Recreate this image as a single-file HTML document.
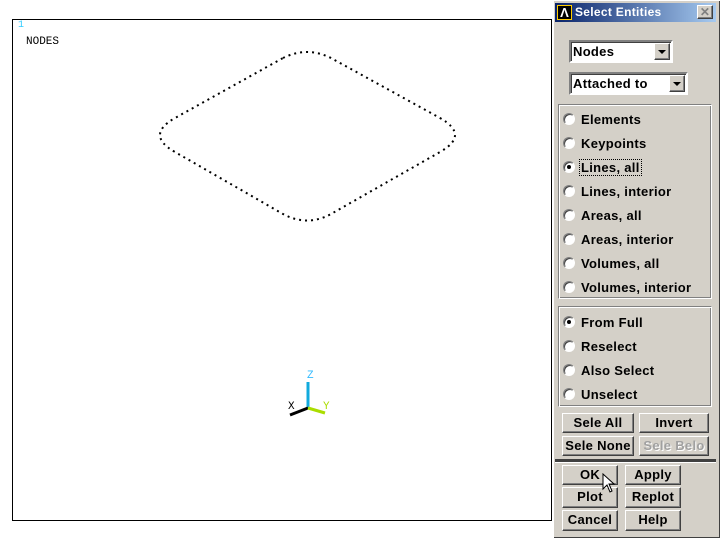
<!DOCTYPE html><html><head><style>
body{margin:0;width:720px;height:538px;background:#fff;position:relative;overflow:hidden;font-family:"Liberation Sans",sans-serif}
.a{position:absolute}
.dlg{left:552px;top:0;width:168px;height:538px;background:#d4d0c8;border-left:1px solid #fff;box-sizing:border-box;box-shadow:inset 1px 1px 0 #fff,inset -1px -1px 0 #404040}
.lbl{font-weight:bold;font-size:13px;color:#000;white-space:nowrap;letter-spacing:0.3px}
.btn{background:#d4d0c8;box-sizing:border-box;border:1px solid;border-color:#fff #404040 #404040 #fff;box-shadow:inset -1px -1px 0 #808080;font-weight:bold;font-size:13px;text-align:center;line-height:17px;letter-spacing:0.3px}
.grp{box-sizing:border-box;border:1px solid;border-color:#808080 #fff #fff #808080;box-shadow:inset 1px 1px 0 #fff,inset -1px -1px 0 #808080}
.rad{width:12px;height:12px;border-radius:50%;background:#fff;box-sizing:border-box;border:1px solid;border-color:#808080 #fff #fff #808080;box-shadow:inset 1px 1px 0 #404040}
.dd{background:#fff;box-sizing:border-box;border:2px solid;border-color:#808080 #fff #fff #808080;box-shadow:inset 1px 1px 0 #404040}
.arr{position:absolute;right:1px;top:1px;width:16px;height:17px;background:#d4d0c8;border:1px solid;border-color:#fff #404040 #404040 #fff;box-sizing:border-box;box-shadow:inset -1px -1px 0 #808080}
.arr:after{content:"";position:absolute;left:3px;top:6px;border:4px solid transparent;border-top:4px solid #000}
</style></head><body>
<div class="a" style="left:12px;top:19px;width:540px;height:502px;border:1px solid #000;box-sizing:border-box"></div>
<div class="a" style="left:18px;top:20px;font:10px 'Liberation Mono',monospace;color:#3cf">1</div>
<div class="a" style="left:26px;top:36px;font:11px 'Liberation Mono',monospace;color:#000">NODES</div>
<svg class="a" style="left:0;top:0" width="552" height="538">
<path d="M283,58 Q307,46 331,58 L440,118 Q470,135 440,152 L331,214 Q307,227 283,214 L175,152 Q145,135 175,118 Z" fill="none" stroke="#000" stroke-width="2" stroke-dasharray="2 4"/>
<line x1="308" y1="408" x2="308" y2="382" stroke="#1ad" stroke-width="3"/>
<line x1="308" y1="408" x2="290" y2="415" stroke="#000" stroke-width="3"/>
<line x1="308" y1="408" x2="325" y2="413" stroke="#ad0" stroke-width="3"/>
<text x="307" y="378" font-size="11" fill="#3bf" font-family="Liberation Mono">Z</text>
<text x="288" y="409" font-size="11" fill="#000" font-family="Liberation Mono">X</text>
<text x="323" y="409" font-size="11" fill="#ad0" font-family="Liberation Mono">Y</text>
</svg>
<div class="a dlg"></div>
<div class="a" style="left:555px;top:3px;width:161px;height:19px;background:linear-gradient(90deg,#0a246a,#a6caf0)"></div>
<div class="a" style="left:557px;top:5px;width:15px;height:15px;background:#000;border:1px solid #fc0;box-sizing:border-box;color:#fff;font-size:13px;font-weight:bold;line-height:14px;text-align:center">Λ</div>
<div class="a lbl" style="left:575px;top:5px;color:#fff;font-size:12px">Select Entities</div>
<div class="a btn" style="left:697px;top:5px;width:16px;height:14px;line-height:12px;font-size:12px;color:#808080">✕</div>
<div class="a dd" style="left:569px;top:40px;width:104px;height:23px"><span class="lbl" style="position:absolute;left:2px;top:2px">Nodes</span><div class="arr"></div></div>
<div class="a dd" style="left:569px;top:72px;width:119px;height:23px"><span class="lbl" style="position:absolute;left:2px;top:2px">Attached to</span><div class="arr"></div></div>
<div class="a grp" style="left:558px;top:104px;width:154px;height:195px"></div>
<div class="a grp" style="left:558px;top:306px;width:154px;height:101px"></div>
<div class="a rad" style="left:563px;top:113px"></div><div class="a lbl" style="left:581px;top:112px">Elements</div>
<div class="a rad" style="left:563px;top:137px"></div><div class="a lbl" style="left:581px;top:136px">Keypoints</div>
<div class="a rad" style="left:563px;top:161px"><div class="a" style="left:3px;top:3px;width:4px;height:4px;background:#000;border-radius:50%"></div></div><div class="a lbl" style="left:579px;top:159px;border:1px dotted #000;padding:0 1px">Lines, all</div>
<div class="a rad" style="left:563px;top:185px"></div><div class="a lbl" style="left:581px;top:184px">Lines, interior</div>
<div class="a rad" style="left:563px;top:209px"></div><div class="a lbl" style="left:581px;top:208px">Areas, all</div>
<div class="a rad" style="left:563px;top:233px"></div><div class="a lbl" style="left:581px;top:232px">Areas, interior</div>
<div class="a rad" style="left:563px;top:257px"></div><div class="a lbl" style="left:581px;top:256px">Volumes, all</div>
<div class="a rad" style="left:563px;top:281px"></div><div class="a lbl" style="left:581px;top:280px">Volumes, interior</div>
<div class="a rad" style="left:563px;top:316px"><div class="a" style="left:3px;top:3px;width:4px;height:4px;background:#000;border-radius:50%"></div></div><div class="a lbl" style="left:581px;top:315px">From Full</div>
<div class="a rad" style="left:563px;top:340px"></div><div class="a lbl" style="left:581px;top:339px">Reselect</div>
<div class="a rad" style="left:563px;top:364px"></div><div class="a lbl" style="left:581px;top:363px">Also Select</div>
<div class="a rad" style="left:563px;top:388px"></div><div class="a lbl" style="left:581px;top:387px">Unselect</div>
<div class="a btn" style="left:562px;top:413px;width:72px;height:20px">Sele All</div>
<div class="a btn" style="left:639px;top:413px;width:70px;height:20px">Invert</div>
<div class="a btn" style="left:562px;top:436px;width:72px;height:20px">Sele None</div>
<div class="a btn" style="left:639px;top:436px;width:70px;height:20px;color:#a0a0a0;text-shadow:1px 1px 0 #fff">Sele Belo</div>
<div class="a" style="left:555px;top:459px;width:161px;height:3px;background:#404040;border-bottom:1px solid #fff"></div>
<div class="a btn" style="left:562px;top:465px;width:56px;height:20px">OK</div>
<div class="a btn" style="left:625px;top:465px;width:56px;height:20px">Apply</div>
<div class="a btn" style="left:562px;top:487px;width:56px;height:21px">Plot</div>
<div class="a btn" style="left:625px;top:487px;width:56px;height:21px">Replot</div>
<div class="a btn" style="left:562px;top:510px;width:56px;height:21px">Cancel</div>
<div class="a btn" style="left:625px;top:510px;width:56px;height:21px">Help</div>
<svg class="a" style="left:602px;top:473px" width="14" height="22"><path d="M1,1 L1,16 L5,12 L8,19 L10,18 L7,11 L12,11 Z" fill="#fff" stroke="#000"/></svg>
</body></html>
